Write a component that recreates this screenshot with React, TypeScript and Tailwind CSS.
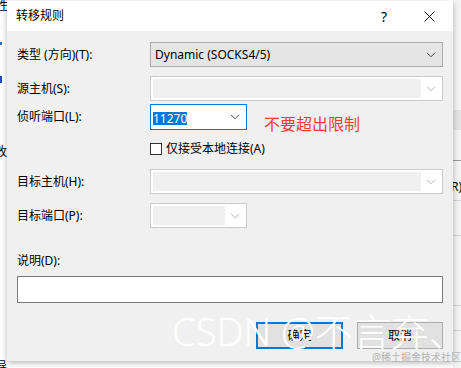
import React from 'react';

const font = { fontFamily: '"Noto Sans", "Noto Sans CJK SC", sans-serif' };

const Chevron: React.FC<{ muted?: boolean }> = ({ muted }) => (
  <svg width="10" height="6" viewBox="0 0 10 6" className="shrink-0">
    <path d="M1 0.8 L5 4.8 L9 0.8" fill="none" stroke={muted ? '#b4b4b4' : '#444'} strokeWidth="1" />
  </svg>
);

const Label: React.FC<{ children: React.ReactNode }> = ({ children }) => (
  <div className="w-[133px] shrink-0 text-[12px] text-black leading-none">{children}</div>
);

const App: React.FC = () => {
  return (
    <div className="relative w-[461px] h-[368px] overflow-hidden bg-white" style={font}>
      {/* background window fragments */}
      <div className="flex h-full">
        <div className="w-[7px] h-full relative overflow-hidden bg-white">
          <div className="absolute left-[-4px] top-[-3px] text-[12px] text-black">性</div>
          <div className="absolute left-0 top-[42px] w-[2px] h-[3px] bg-[#2a6fc9]" />
          <div className="absolute left-0 top-[76px] w-[2px] h-[7px] bg-[#1f4fa8]" />
          <div className="absolute left-[-5px] top-[143px] text-[12px] text-black">改</div>
          <div className="absolute left-[-5px] top-[358px] text-[12px] text-black">导</div>
        </div>
        <div className="flex-1" />
        <div className="w-[8px] h-full relative overflow-hidden bg-[#f3f3f3]">
          <div className="absolute left-0 top-[110px] w-full h-[20px] bg-[#e3e3e3]" />
          <div className="absolute left-0 top-[160px] w-full h-px bg-[#9a9a9a]" />
          <div className="absolute left-[-2px] top-[178px] text-[12px] text-black">R)</div>
          <div className="absolute left-0 top-[200px] w-full h-px bg-[#d5d5d5]" />
          <div className="absolute left-0 top-[235px] w-full h-px bg-[#d5d5d5]" />
          <div className="absolute left-0 top-[305px] w-full h-px bg-[#d5d5d5]" />
          <div className="absolute left-0 top-[330px] w-full h-px bg-[#d5d5d5]" />
        </div>
      </div>

      {/* dialog */}
      <div className="absolute left-[7px] top-[1px] w-[446px] h-[360px] flex flex-col bg-[#f0f0f0] shadow-[0_2px_6px_rgba(0,0,0,0.28)]">
        <div className="h-[30px] bg-white flex items-center pl-[9px] pr-[18px] shrink-0">
          <div className="text-[12px] text-black flex-1">转移规则</div>
          <div className="text-[14px] text-black mr-[37px]">?</div>
          <svg width="11" height="11" viewBox="0 0 11 11">
            <path d="M0.5 0.5 L10.5 10.5 M10.5 0.5 L0.5 10.5" stroke="#111" strokeWidth="1" />
          </svg>
        </div>

        <div className="flex flex-col px-[10px] pt-[11px]">
          {/* type */}
          <div className="flex items-center">
            <Label>类型 (方向)(T):</Label>
            <div className="flex-1 h-[25px] border border-[#adadad] bg-[#e5e5e5] flex items-center pl-[4px] pr-[6px]">
              <span className="flex-1 text-[12px] text-black">Dynamic (SOCKS4/5)</span>
              <Chevron />
            </div>
          </div>

          {/* source host */}
          <div className="flex items-center mt-[9px]">
            <Label>源主机(S):</Label>
            <div className="flex-1 h-[25px] border border-[#cccccc] bg-white flex items-center p-[2px] pr-[6px]">
              <div className="flex-1 h-full bg-[#f0f0f0] mr-[5px]" />
              <Chevron muted />
            </div>
          </div>

          {/* listen port */}
          <div className="flex items-center mt-[3px]">
            <Label>侦听端口(L):</Label>
            <div className="w-[97px] h-[26px] border border-[#0078d7] bg-white flex items-center pl-[2px] pr-[6px]">
              <div className="flex-1">
                <span className="bg-[#0078d7] text-white text-[12px] leading-[13px] inline-block">11270</span>
              </div>
              <Chevron />
            </div>
            <div className="ml-[17px] self-end mb-[-2px] leading-[16px] text-[16px] text-[#f23c3c]">不要超出限制</div>
          </div>

          {/* local only */}
          <div className="flex items-center mt-[12px] pl-[133px] h-[14px]">
            <div className="w-[12px] h-[12px] border border-[#333] bg-white" />
            <span className="ml-[4px] text-[12px] text-black">仅接受本地连接(A)</span>
          </div>

          {/* target host */}
          <div className="flex items-center mt-[13px]">
            <Label>目标主机(H):</Label>
            <div className="flex-1 h-[25px] border border-[#cccccc] bg-white flex items-center p-[2px] pr-[6px]">
              <div className="flex-1 h-full bg-[#f0f0f0] mr-[5px]" />
              <Chevron muted />
            </div>
          </div>

          {/* target port */}
          <div className="flex items-center mt-[9px]">
            <Label>目标端口(P):</Label>
            <div className="w-[97px] h-[25px] border border-[#cccccc] bg-white flex items-center p-[2px] pr-[6px]">
              <div className="flex-1 h-full bg-[#f0f0f0] mr-[5px]" />
              <Chevron muted />
            </div>
          </div>

          <div className="mt-[27px] text-[12px] text-black leading-none">说明(D):</div>
          <div className="mt-[9px] h-[27px] border border-[#7a7a7a] bg-white" />

          <div className="flex justify-end gap-[14px] mt-[19px]">
            <div className="w-[87px] h-[27px] border-2 border-[#0078d7] bg-[#e1e1e1] flex items-center justify-center text-[12px] text-black">确定</div>
            <div className="w-[86px] h-[27px] border border-[#adadad] bg-[#e1e1e1] flex items-center justify-center text-[12px] text-black">取消</div>
          </div>
        </div>
      </div>

      {/* watermarks */}
      <div className="absolute left-[172px] top-[312px] text-[38px] leading-none text-white font-light whitespace-nowrap">CSDN @不言弃、</div>
      <div className="absolute left-[372px] top-[352px] text-[10px] leading-none text-[#b4b4b4] whitespace-nowrap">@稀土掘金技术社区</div>
    </div>
  );
};

export default App;
